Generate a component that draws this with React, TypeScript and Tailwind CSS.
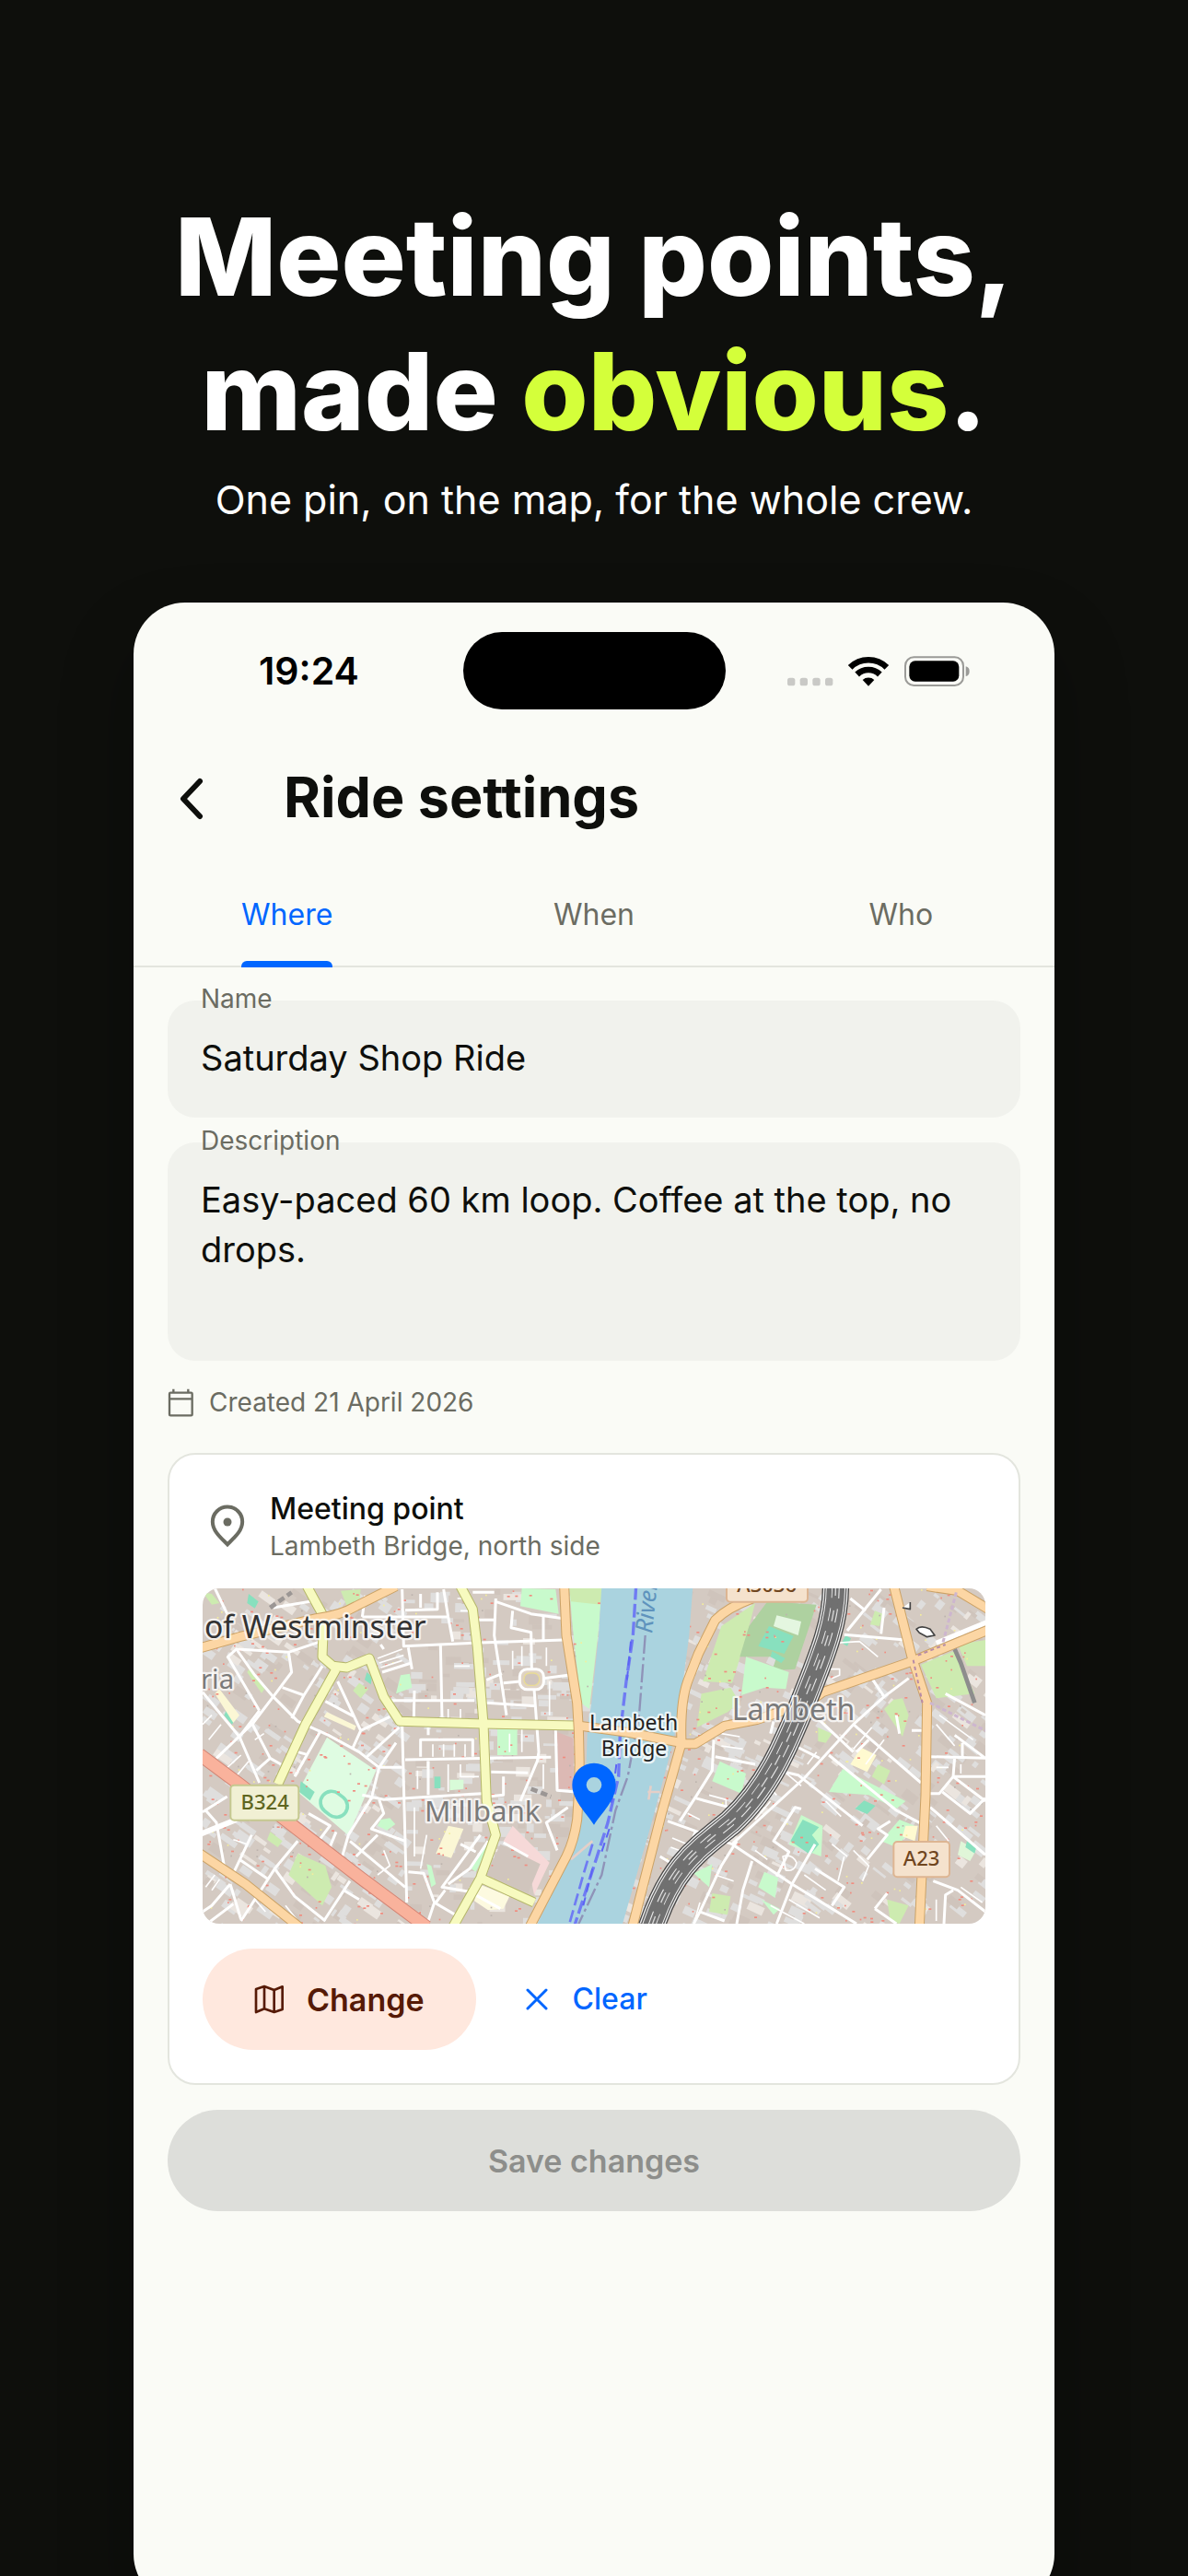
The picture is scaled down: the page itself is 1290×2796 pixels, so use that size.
import React, { useState } from 'react';

type Tab = 'Where' | 'When' | 'Who';

const TABS: Tab[] = ['Where', 'When', 'Who'];

/* ---------- Map data ---------- */

const MINOR_WEST = [
  'M30 365 L75 420 L150 510 L215 660',
  'M215 425 L112 250 L140 225 L200 310 L260 380 L340 460 L440 505 L540 560 L605 610 L680 610',
  'M75 580 L195 465 L260 380 L320 300 L310 235 L140 225',
  'M190 465 L250 580 L285 600 M250 580 L205 620 M150 510 L215 425',
  'M420 280 L360 375 L290 350 M360 375 L320 450 M310 235 L415 200',
  'M470 330 L545 490 L520 545 M430 395 L525 445 M545 490 L640 445 M670 480 L560 580',
  'M605 610 L580 710 L505 830 L485 900 M550 700 L620 715 L940 695 M660 530 L605 610',
  'M680 470 L695 1050 M690 585 L1165 577 M605 715 L620 760 L580 810 L690 850',
  'M415 490 L330 640 M340 560 L370 568 M30 755 L110 705 M40 750 L75 790 L100 930',
  'M190 830 L130 955 M150 910 L245 975 M340 850 L265 940 L155 1110 M265 940 L330 1030 L430 1110',
  'M510 980 L425 1110 M375 760 L445 800 L400 860 M465 820 L440 880 M510 850 L690 1000',
  'M120 990 L155 1105 M120 990 L60 1060 L30 1080 M45 1119 L130 1055 M490 1010 L540 1040',
  'M680 30 L685 215 L910 205 L1205 195 M550 120 L830 120 L845 200 M815 30 L830 120 M690 98 L795 95 V40 M740 90 V45',
  'M805 210 L810 450 M640 392 L915 392 M720 360 L718 450 M700 220 L712 290 M615 300 L710 270 M610 210 L620 225',
  'M985 60 L980 180 L1020 440 M985 70 L1100 110 L1205 125 M1040 100 L1035 155 L1100 170 L1102 290',
  'M1140 120 V195 M1110 355 L1125 560 L1120 590 L1065 720 M955 400 L1115 410 M1010 335 L1065 330 M1140 320 L1220 310',
  'M740 575 V520 H910 V575 M765 590 V700 M765 480 V505 M920 130 H980 M955 325 L1005 305',
  'M1180 490 L1185 685 L1245 690 M970 625 L1090 628 M1010 640 V700 L960 705 M910 40 H980',
  'M935 830 L810 1000 L900 1015 L1000 1070 M870 860 L920 885 M960 850 L900 940 L830 990 M820 1010 L790 1050',
  'M700 950 L750 955 L785 1050 L765 1110 M785 1050 L870 1100 M1010 855 L1090 900 M1220 740 L1150 790 L1185 880',
  'M70 27 L110 110 M260 90 L380 70 M560 50 L550 120 M530 900 L600 830',
];

const MINOR_EAST = [
  'M405 520 L400 620 L350 700 L295 785 M410 575 L540 600 M345 710 L455 740',
  'M255 785 L465 860 L660 990 L870 1119 M345 820 L320 890 M230 900 L280 930',
  'M480 850 L430 930 L360 1080 L340 1119 M530 915 L500 1010 L480 1119',
  'M465 860 L700 645 L860 470 L960 380 L1040 320 M700 410 L860 560',
  'M670 540 L750 580 M635 625 L680 635 L890 800 M780 570 L1000 750 L1075 790 M860 470 L1080 660',
  'M960 380 L920 320 M830 178 L1030 195 M950 30 L840 165 M850 60 L900 100 M960 90 L950 175',
  'M690 745 L670 740 L600 850 L650 885 L610 965 M660 990 L735 860 M735 940 L830 1000 L790 1060 M660 990 L610 1119',
  'M980 785 L940 810 L970 830 L905 910 M360 1080 L440 1110 M870 560 L910 520',
  'M1110 575 L1290 580 M1190 505 L1290 580 M1215 530 V575 M1190 575 L1185 640 L1140 695 L1110 695',
  'M1185 640 L1290 720 M1185 640 H1290 M1150 690 L1240 760 L1290 710 M1110 740 L1290 895',
  'M1120 980 L1200 1010 L1290 1080 M1155 1119 L1160 1025 L1185 1010 M930 1070 L1000 1119 M930 1070 L970 1020',
  'M1050 490 H1085 M1000 440 L1010 500 M1160 370 L1290 440 M600 460 L590 500',
];

// Courtyards and alleys
const ALLEYS = [
  'M600 255 L680 225 M605 270 L685 245 M610 285 L680 262 M780 535 V575 M815 535 V575 M850 535 V575 M885 535 V575',
  'M155 570 L100 620 M180 590 L130 650 M230 500 L200 520 M60 440 L30 470 M90 470 L50 520 M130 845 L175 860 L165 880',
  'M70 960 L40 1000 M85 975 L60 1010 M200 1040 L235 1080 M215 1020 L255 1060 M300 1060 L340 1110 M620 880 L640 930 L600 960',
  'M730 620 V680 M830 600 V690 M870 600 V640 H930 M720 740 V900 M760 830 L740 940 M1040 230 V290 M1070 215 V280 M1150 220 V280',
  'M1160 330 V440 M870 100 H900 M860 60 H890 M1030 500 V560 M1070 480 V560 M1140 600 V680 M850 280 H900 M830 420 V450 M870 420 V450',
  'M2070 290 L2105 290 L2105 310 L2080 320 M2010 210 L2170 200 L2230 250 M2120 900 L2100 980 M1680 700 L1735 715 V740',
  'M1610 760 L1650 780 M1560 840 L1620 865 M1555 870 L1610 890 M1550 930 L1590 945 M1720 500 L1780 510 M1720 540 L1790 550',
  'M1840 640 L1900 700 M1880 720 L1830 780 M1920 620 L1980 670 M2030 560 L2000 600 M2060 720 L2110 770 M2080 860 L2130 900',
  'M1920 900 Q1950 890 1965 920 Q1960 950 1930 945 Z M1830 880 L1870 910 M1990 960 L2060 1010 M2150 880 L2200 930 L2180 980',
  'M2430 440 L2540 520 M2420 470 L2480 540 M2420 610 H2460 M2500 600 V630 M2420 800 L2460 850 M2420 1040 V1110 M2500 1000 L2570 1050',
  'M1880 1060 L1990 1119 M1940 1040 L2040 1100 M1700 960 L1760 980 M1650 1050 L1630 1119 M2210 480 L2150 550 M2250 520 L2190 600',
];

const YELLOW_ROADS = [
  'M370 20 L400 75 L425 120 L420 250 L455 280 L500 285 L573 255 L620 380 L672 460 L945 468 L1245 474',
  'M465 290 L365 470 L275 665',
  'M870 20 L910 95 L925 220 L945 468 L955 720 L985 830 L935 970 L845 1130',
  'M935 970 L1110 1050',
];

const ORANGE_ROADS = [
  'M20 222 L150 185 L400 125 Q480 115 530 85 L660 20',
  'M20 890 L170 990 L345 1130',
  'M1208 20 L1215 180 L1250 400 Q1265 600 1250 780 Q1240 850 1215 900 L1095 1130',
  'M1262 475 L1420 497 L1590 530',
  'M1430 1130 L1525 760 L1590 530 Q1585 400 1610 330 L1645 240 L1700 130 Q1740 90 1820 60',
  'M1590 533 H1635 L1730 475 L1835 455 L2010 395 L2050 365 L2340 265 L2590 162',
  'M2282 20 L2340 250 L2390 400 L2385 700 L2365 1130',
  'M2390 20 L2490 35 L2590 95',
];

const RAILWAY = 'M2092 15 C2095 130 2050 240 1990 390 C1930 540 1870 680 1750 790 C1640 880 1560 930 1492 1130';

const GREENS: [string, string][] = [
  ['#c8facc', '1225,27 1332,27 1318,180 1290,420 1262,400 1235,150'],
  ['#cdebb0', '1225,27 1332,27 1328,80 1230,70'],
  ['#c8facc', '1070,27 1180,30 1190,110 1065,85'],
  ['#c8facc', '675,310 705,305 712,350 660,370'],
  ['#dffce2', '435,512 595,620 505,832 340,690'],
  ['#88e0be', '350,655 395,690 380,718 345,690'],
  ['#88e0be', '180,45 212,70 200,92 175,75'],
  ['#88e0be', '565,300 582,315 578,340 558,325'],
  ['#cdebb0', '540,335 570,355 545,385 520,360'],
  ['#88e0be', '112,415 142,450 125,470 100,440'],
  ['#cdebb0', '185,285 232,355 222,368 175,300'],
  ['#c8facc', '990,485 1055,485 1055,570 990,570'],
  ['#cdebb0', '340,890 430,930 450,1000 420,1060 310,960'],
  ['#c8facc', '610,780 640,775 658,795 630,815 600,800'],
  ['#88e0be', '785,640 805,640 805,678 785,678'],
  ['#c8facc', '760,925 775,930 790,990 775,1000'],
  ['#c8facc', '960,850 965,860 920,950 905,940'],
  ['#cdebb0', '480,35 545,30 540,80 500,85'],
  ['#cdebb0', '30,40 60,45 85,75 60,80'],
  ['#cdebb0', '250,820 290,850 275,870 240,845'],
  ['#d8fbd8', '835,650 880,650 880,680 835,685'],
  ['#fdfae0', '930,990 1030,1030 1010,1070 960,1075 915,1045'],
  ['#f6d9d8', '1040,800 1160,920 1110,1025 1085,900 1010,850'],
  ['#d0c5bd', '1000,860 1130,925 1090,1020 955,960'],
  ['#dcb9b4', '1185,495 1238,515 1238,680 1190,680'],
  ['#fbf7d5', '830,800 880,810 840,905 790,890'],
  ['#fbf7d5', '435,430 530,475 525,490 425,445'],
  ['#fbf7d5', '85,355 150,440 130,465 70,370'],
  ['#cdebb0', '1720,150 1830,75 1800,190 1755,335 1660,330'],
  ['#aed1a0', '1870,70 2030,80 1960,290 1885,295 1900,250 1780,250 1810,150'],
  ['#e4f6e0', '1900,115 1980,135 1970,180 1890,150'],
  ['#88e0be', '1875,150 1955,182 1925,240 1840,215'],
  ['#88e0be', '1885,232 1928,255 1915,270 1880,250'],
  ['#c8facc', '1800,250 1940,300 1930,355 1860,350 1785,375'],
  ['#cdebb0', '1655,370 1750,350 1780,400 1740,430 1640,480'],
  ['#c8facc', '1715,590 1800,630 1785,695 1690,655'],
  ['#c8facc', '2115,615 2320,720 2290,745 2200,700 2070,690'],
  ['#c8facc', '2240,850 2300,780 2350,800 2290,870'],
  ['#88e0be', '2185,718 2222,735 2195,762 2155,745'],
  ['#c8facc', '1980,765 2050,800 2045,900 1940,860'],
  ['#88e0be', '1985,780 2038,805 2015,830 2038,860 2010,895 1945,850'],
  ['#cdebb0', '2370,275 2480,230 2545,370 2420,385'],
  ['#cdebb0', '2490,210 2580,195 2580,280 2520,280'],
  ['#c8facc', '1860,950 1905,970 1895,1035 1840,1000'],
  ['#c8facc', '1630,955 1690,925 1680,1000'],
  ['#c8facc', '1850,1040 1910,1070 1890,1090'],
  ['#cdebb0', '2280,390 2310,385 2330,440 2310,510 2250,420'],
  ['#cdebb0', '2220,100 2245,110 2235,150 2205,145'],
  ['#88e0be', '2125,180 2142,190 2130,215 2112,205'],
  ['#cdebb0', '2230,600 2270,620 2250,665 2210,640'],
  ['#cdebb0', '2260,1040 2330,1060 2300,1119 2270,1110'],
  ['#cdebb0', '2035,480 2080,500 2060,530 2035,525'],
  ['#fffad0', '2175,545 2225,570 2195,625 2140,600'],
  ['#fffad0', '2320,800 2360,800 2350,850 2310,835'],
  ['#e0f6d8', '2500,850 2550,880 2530,915 2490,895'],
  ['#88e0be', '2520,850 2550,872 2545,890 2515,870'],
  ['#cdebb0', '1690,1020 1750,1030 1740,1090 1680,1080'],
];

// Seeded generator so that the blocks fall on the same spots at every render
const scatter = (count: number, start: number) => {
  let seed = start;
  const next = () => {
    seed = (seed * 1103515245 + 12345) % 2147483648;
    return seed / 2147483648;
  };
  return Array.from({ length: count }, () => ({
    x: Math.round(30 + next() * 2550),
    y: Math.round(27 + next() * 1092),
    w: Math.round(14 + next() * 50),
    h: Math.round(8 + next() * 24),
    tone: next(),
  }));
};

const BLOCKS = scatter(1100, 7);
const SPECKS = scatter(800, 91);

const blockAngle = (x: number) => (x < 680 ? 35 : x < 1330 ? 1 : x < 2000 ? 25 : 38);
const blockFill = (tone: number) => (tone < 0.55 ? '#dfdedd' : tone < 0.85 ? '#cfc4bc' : '#ebe5df');

const RoadSet: React.FC<{ paths: string[]; color: string; casing: string; width: number }> = ({ paths, color, casing, width }) => (
  <g fill="none" strokeLinejoin="round">
    {paths.map((d) => <path key={d} d={d} stroke={casing} strokeWidth={width + 6} />)}
    {paths.map((d) => <path key={d} d={d} stroke={color} strokeWidth={width} />)}
  </g>
);

const MeetingMap = () => (
  <svg
    viewBox="30 27 2550 1092"
    role="img"
    aria-label="Map of Lambeth Bridge with the meeting point"
    className="mt-7 block w-full rounded-[18px] font-['Noto_Sans',sans-serif]"
  >
    <rect x="30" y="27" width="2550" height="1092" fill="#d4cac2" />
    {BLOCKS.map((b, i) => (
      <rect key={i} x={b.x} y={b.y} width={b.w} height={b.h} fill={blockFill(b.tone)} transform={`rotate(${blockAngle(b.x)} ${b.x} ${b.y})`} />
    ))}
    {GREENS.map(([fill, points]) => <polygon key={points} points={points} fill={fill} />)}
    <rect x="412" y="694" width="92" height="72" rx="36" fill="none" stroke="#88e0be" strokeWidth="11" transform="rotate(38 458 730)" />
    {SPECKS.map((s, i) => (
      <rect key={i} x={s.x} y={s.y} width={s.tone < 0.5 ? 9 : 5} height="5" fill={s.tone < 0.72 ? '#f08d80' : s.tone < 0.85 ? '#bcb3ad' : '#f3ee9c'} />
    ))}

    {/* Streets */}
    <g fill="none" stroke="#ffffff" strokeWidth="9" strokeLinejoin="round">
      {ALLEYS.map((d) => <path key={d} d={d} strokeWidth="5" />)}
      {MINOR_WEST.map((d) => <path key={d} d={d} />)}
      <rect x="1063" y="290" width="78" height="66" rx="24" fill="#dfd2c4" />
      <rect x="1077" y="303" width="50" height="40" rx="18" fill="#d0c5bd" stroke="#e9dc95" strokeWidth="4" />
      <path d="M20 828 L140 780" strokeWidth="18" />
      <g transform="translate(1290 0)">
        {MINOR_EAST.map((d) => <path key={d} d={d} />)}
        <path d="M1130 205 L1300 135" strokeWidth="16" />
      </g>
    </g>

    {/* Thames */}
    <path d="M1330 20 L1320 180 L1297 400 L1284 480 L1276 700 L1245 870 L1115 1130 H1395 L1490 800 L1560 540 L1582 430 L1615 180 L1627 20 Z" fill="#aad3df" />
    <g fill="none" strokeWidth="10">
      <path d="M1442 20 L1432 180 L1410 330 L1390 500 L1385 640 L1350 790 L1315 900 L1240 1130" stroke="#6f7bf3" strokeDasharray="44 14" />
      <path d="M1425 200 L1412 330 M1378 600 L1360 740 M1355 810 L1325 900 M1300 940 L1270 1060" stroke="#5c63f5" strokeWidth="6" strokeDasharray="30 18" />
      <path d="M1300 860 L1270 960 L1225 1119" stroke="#6f7bf3" strokeWidth="8" strokeDasharray="40 16" />
      <path d="M1472 180 L1452 440 L1415 640 L1375 750 L1330 960 L1250 1130" stroke="#8f93b8" strokeWidth="7" strokeDasharray="60 12 10 12" />
      <path d="M1230 910 L1300 850 M1490 670 L1483 715 M1480 690 H1520" stroke="#e5cfc8" strokeWidth="8" />
    </g>

    <RoadSet paths={YELLOW_ROADS} color="#f7fabf" casing="#b5b769" width={27} />
    <RoadSet paths={['M20 568 L150 665 L340 812 L545 970 L760 1130']} color="#f9b29c" casing="#d38575" width={38} />
    <RoadSet paths={ORANGE_ROADS} color="#fcd6a4" casing="#cba266" width={27} />

    {/* Railway */}
    <g fill="none" strokeLinejoin="round">
      <path d={RAILWAY} stroke="#4a4a4a" strokeWidth="88" />
      <path d={RAILWAY} stroke="#efefef" strokeWidth="80" />
      <path d={RAILWAY} stroke="#5a5a5a" strokeWidth="72" />
      <path d={RAILWAY} stroke="#efefef" strokeWidth="64" />
      <path d={RAILWAY} stroke="#707070" strokeWidth="58" />
      <path d={RAILWAY} stroke="#e8e8e8" strokeWidth="26" strokeDasharray="44 34" />
      <path d={RAILWAY} stroke="#707070" strokeWidth="20" />
      <path d={RAILWAY} stroke="#d8d8d8" strokeWidth="4" strokeDasharray="36 48" />
      <path d="M2480 225 L2500 270 L2545 400" stroke="#8d8d8d" strokeWidth="14" />
      <path d="M2345 260 L2375 400 M2360 245 L2450 210" stroke="#b78ba6" strokeWidth="6" strokeDasharray="12 10" />
      <path d="M2400 400 L2580 490 M2485 40 L2440 210" stroke="#cdb6cf" strokeWidth="9" strokeDasharray="14 8" />
      <path d="M250 90 L320 40 M1100 680 L1165 705" stroke="#9b9694" strokeWidth="14" strokeDasharray="22 12" />
      <path d="M2355 160 Q2370 145 2400 160 L2415 180 L2390 185 L2365 172 Z M2310 90 L2335 95 V72" fill="#ffffff" stroke="#444444" strokeWidth="5" />
    </g>

    {/* Road numbers */}
    <g strokeWidth="6">
      <rect x="121" y="668" width="222" height="114" rx="12" fill="#f1f0d4" stroke="#c5c88f" />
      <rect x="2281" y="852" width="182" height="115" rx="12" fill="#f5e2cd" stroke="#ddb592" />
      <rect x="1737" y="-40" width="264" height="111" rx="12" fill="#f5e2cd" stroke="#ddb592" />
    </g>
    <g fontSize="66" textAnchor="middle" fontWeight="500">
      <text x="233" y="748" fill="#5f661f">B324</text>
      <text x="2372" y="931" fill="#70461f">A23</text>
      <text x="1868" y="40" fill="#70461f">A3036</text>
    </g>

    {/* Place names */}
    <g stroke="#ffffff" strokeWidth="14" strokeLinejoin="round" strokeOpacity="0.75" className="[paint-order:stroke]">
      <text x="36" y="188" fontSize="101" fill="#333333">of Westminster</text>
      <text x="24" y="354" fontSize="88" fill="#7a7a7a">ria</text>
      <text x="753" y="785" fontSize="94" fill="#7a7a7a">Millbank</text>
      <text x="1754" y="457" fontSize="96" fill="#7a7a7a">Lambeth</text>
      <text x="1290" y="488" fontSize="69" fill="#222222">Lambeth</text>
      <text x="1328" y="572" fontSize="69" fill="#222222">Bridge</text>
    </g>
    <text x="1494" y="175" fontSize="78" fontStyle="italic" fill="#5f93bd" transform="rotate(-84 1494 175)">River</text>

    {/* Pin */}
    <path
      fillRule="evenodd"
      fill="#0066ff"
      d="M1305 797 C1280 758 1234 718 1234 667 A71 71 0 0 1 1376 667 C1376 718 1330 758 1305 797 Z M1280 667 A25 25 0 1 0 1330 667 A25 25 0 1 0 1280 667 Z"
    />
  </svg>
);

/* ---------- Icons ---------- */

const StatusIcons = () => (
  <svg viewBox="45 91 597 99" className="w-[199px] h-[33px]" aria-hidden="true">
    <g fill="#c9c9c6">
      <rect x="45" y="162" width="25" height="26" rx="8" />
      <rect x="86" y="162" width="25" height="26" rx="8" />
      <rect x="127" y="162" width="25" height="26" rx="8" />
      <rect x="168" y="162" width="25" height="26" rx="8" />
    </g>
    <g fill="none" stroke="#000000" strokeWidth="20">
      <path d="M249.500 128 A85 85 0 0 1 368.500 128" />
      <path d="M272 151 A53 53 0 0 1 346 151" />
    </g>
    <path d="M309 189 L290 169 A28 28 0 0 1 328 169 Z" />
    <rect x="429" y="95" width="189" height="92" rx="28" fill="none" stroke="#9b9b98" strokeWidth="6" />
    <rect x="442" y="107" width="162" height="67" rx="19" />
    <path d="M626 125 Q638 128 638 141 Q638 154 626 157 Z" fill="#9b9b98" />
  </svg>
);

const BackIcon = () => (
  <svg viewBox="0 0 28 46" className="w-7 h-[46px]" fill="none" stroke="currentColor" strokeWidth="6" strokeLinecap="round" strokeLinejoin="round" aria-hidden="true">
    <path d="M23 4 L5 23 L23 42" />
  </svg>
);

const CalendarIcon = () => (
  <svg viewBox="39 50 87 93" className="w-[29px] h-[31px]" fill="none" stroke="currentColor" strokeWidth="7" aria-hidden="true">
    <path d="M45 67 Q45 64 49 64 H115 Q119 64 119 67 V134 Q119 138 115 138 H49 Q45 138 45 134 Z M45 84 H119 M58 52 V64 M106 52 V64" />
  </svg>
);

const PlaceIcon = () => (
  <svg viewBox="175 429 114 141" className="w-[38px] h-[47px]" aria-hidden="true">
    <path d="M232 559 C215 541 183.500 517 183.500 485 A48.500 48.500 0 0 1 280.500 485 C280.500 517 249 541 232 559 Z" fill="none" stroke="currentColor" strokeWidth="12" />
    <circle cx="232" cy="486" r="13.500" fill="currentColor" />
  </svg>
);

const MapIcon = () => (
  <svg viewBox="206 162 99 96" className="w-[33px] h-8" fill="none" stroke="currentColor" strokeWidth="8" strokeLinejoin="round" aria-hidden="true">
    <path d="M212 177 L239 168 L271 180 L298 169 V243 L271 252 L239 241 L212 252 Z M239 168 V241 M271 180 V252" />
  </svg>
);

const CloseIcon = () => (
  <svg viewBox="0 0 24 24" className="w-6 h-6" fill="none" stroke="currentColor" strokeWidth="3" strokeLinecap="round" aria-hidden="true">
    <path d="M2 2 L22 22 M22 2 L2 22" />
  </svg>
);

/* ---------- Screen ---------- */

const StatusBar = () => (
  <div className="grid grid-cols-[1fr_285px_1fr] items-center pt-8 pb-[18px]">
    <span className="pl-[136px] text-[41px] leading-[50px] font-semibold text-black">19:24</span>
    <span className="h-[84px] rounded-full bg-black" />
    <span className="flex justify-end pr-[91px]"><StatusIcons /></span>
  </div>
);

export default function App() {
  const [tab, setTab] = useState<Tab>('Where');

  return (
    <main className="h-screen overflow-hidden bg-[#0e0f0c] px-[145px] pt-[206px] font-['Inter','Liberation_Sans',sans-serif]">
      {/* Headline */}
      <h1 className="text-center text-[117px] leading-[146px] font-extrabold text-white whitespace-nowrap">
        Meeting points,
        <br />
        made <span className="text-[#d4ff3a]">obvious</span>.
      </h1>
      <p className="mt-[14px] text-center text-[43px] leading-[60px] text-white">One pin, on the map, for the whole crew.</p>

      {/* Phone */}
      <div className="mt-[82px] min-h-[2174px] rounded-[56px] bg-[#fafbf6] text-[#0e0f0c] shadow-[0_40px_80px_rgba(0,0,0,0.3)]">
        <StatusBar />

        <header className="flex items-center gap-[86px] h-[158px] pl-[49px]">
          <button type="button" aria-label="Back">
            <BackIcon />
          </button>
          <h2 className="pb-1 text-[61px] leading-[80px] font-bold">Ride settings</h2>
        </header>

        <div role="tablist" className="grid grid-cols-3 border-b-2 border-[#e3e5de]">
          {TABS.map((name) => (
            <button
              key={name}
              type="button"
              role="tab"
              aria-selected={tab === name}
              onClick={() => setTab(name)}
              className={`flex justify-center text-[32px] leading-10 ${tab === name ? 'text-[#0066ff]' : 'text-[#6b6c62]'}`}
            >
              <span className="relative pt-[27px] pb-[35px]">
                {name}
                {tab === name && <span className="absolute inset-x-0 -bottom-0.5 h-[7px] rounded-t-[6px] bg-[#0066ff]" />}
              </span>
            </button>
          ))}
        </div>

        <form className="px-[37px] pt-9" onSubmit={(e) => e.preventDefault()}>
          <div className="relative">
            <label htmlFor="ride-name" className="absolute left-9 -top-5 text-[28px] leading-9 text-[#6b6c62]">Name</label>
            <input
              id="ride-name"
              type="text"
              defaultValue="Saturday Shop Ride"
              className="block w-full h-[127px] px-9 pb-1 rounded-[30px] bg-[#f1f2ed] text-[38px] outline-none"
            />
          </div>
          <div className="relative mt-[27px]">
            <label htmlFor="ride-description" className="absolute left-9 -top-5 text-[28px] leading-9 text-[#6b6c62]">Description</label>
            <textarea
              id="ride-description"
              defaultValue="Easy-paced 60 km loop. Coffee at the top, no drops."
              className="block w-full h-[237px] px-9 pt-[35px] rounded-[30px] bg-[#f1f2ed] text-[38px] leading-[54px] resize-none outline-none"
            />
          </div>

          <p className="mt-[25px] flex items-center gap-4 text-[28px] leading-10 text-[#6b6c62]">
            <CalendarIcon />
            Created 21 April 2026
          </p>

          {/* Meeting point card */}
          <section className="mt-[35px] px-9 pt-[37px] pb-9 rounded-[30px] border-2 border-[#e3e5de] bg-white">
            <div className="flex items-center gap-[27px] pl-2">
              <span className="text-[#6b6c62]"><PlaceIcon /></span>
              <div>
                <h3 className="text-[32px] leading-[44px] font-medium">Meeting point</h3>
                <p className="text-[28px] leading-9 text-[#6b6c62]">Lambeth Bridge, north side</p>
              </div>
            </div>

            <MeetingMap />

            <div className="mt-[27px] flex items-center gap-[54px]">
              <button type="button" className="flex items-center justify-center gap-6 h-[110px] px-14 rounded-full bg-[#ffe8de] text-[34px] font-semibold text-[#561a06]">
                <MapIcon />
                Change
              </button>
              <button type="button" className="flex items-center gap-[27px] text-[32px] font-medium text-[#0066ff]">
                <CloseIcon />
                Clear
              </button>
            </div>
          </section>

          <button type="submit" disabled className="mt-[27px] w-full h-[110px] rounded-full bg-[#dddeda] text-[34px] font-semibold text-[#8d8e8b]">
            Save changes
          </button>
        </form>
      </div>
    </main>
  );
}
